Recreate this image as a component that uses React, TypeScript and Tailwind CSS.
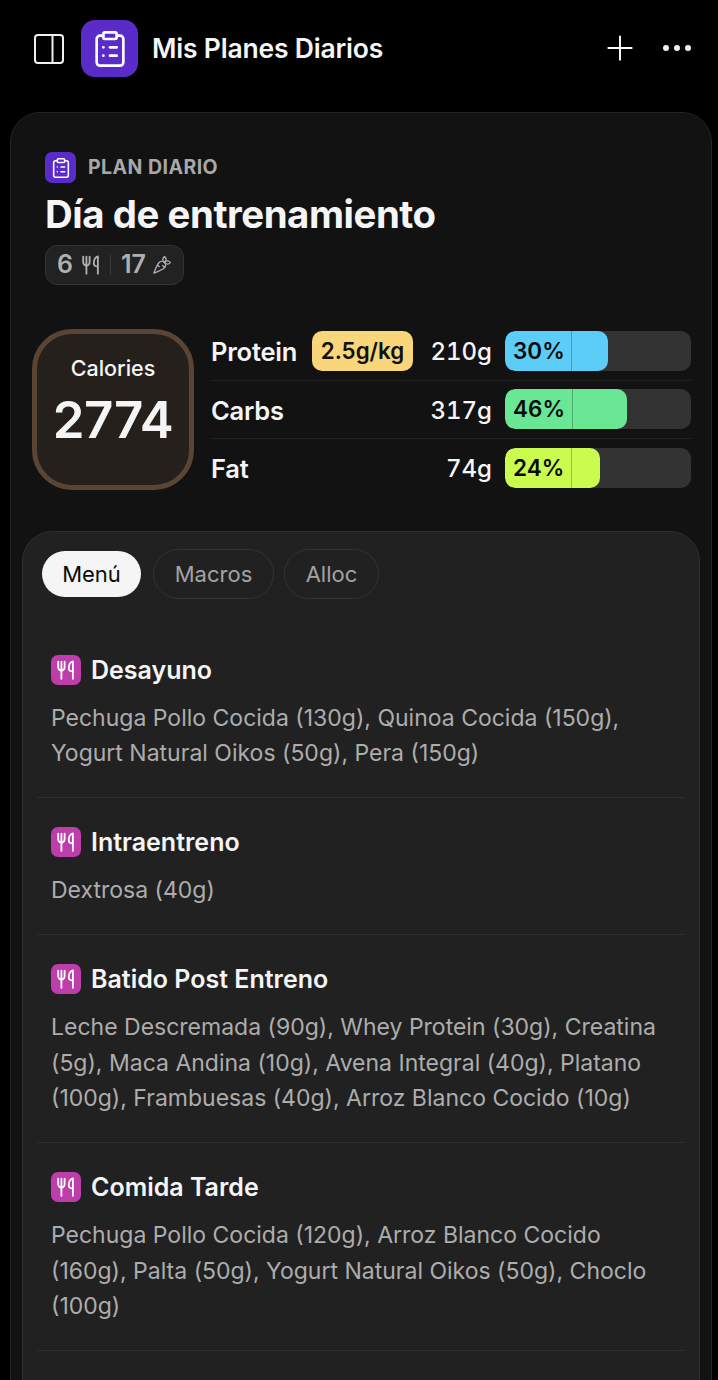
import { ClipboardList, Carrot, Plus } from "lucide-react";

function Utensil({ className }: { className?: string }) {
  return (
    <svg viewBox="0 0 24 24" fill="none" stroke="currentColor" strokeWidth="2" strokeLinecap="round" strokeLinejoin="round" className={className}>
      <path d="M3.5 3v6a3.5 3.5 0 0 0 7 0V3" />
      <path d="M7 3v18.5" />
      <path d="M19.5 21.5V2.5c-3 1-4.500 4-4.500 7.500 0 2.500 1.500 3.500 4.500 3.500" />
    </svg>
  );
}

function Meal({ title, text, divider = true }: { title?: string; text?: string; divider?: boolean }) {
  return (
    <div className={divider ? "border-b border-[#2e2e2e] px-[14px] pt-[29px] pb-[25.5px]" : "px-[14px] pt-[29px] pb-[25.5px]"}>
      <div className="flex h-[30px] items-center gap-[10px]">
        <div className="flex h-[30px] w-[30px] items-center justify-center rounded-[7px] bg-[#bd3dab]">
          <Utensil className="h-[22px] w-[22px] text-white" />
        </div>
        {title ? <div className="text-[25px] font-semibold leading-[30px] text-[#f5f5f5]">{title}</div> : null}
      </div>
      {text ? <p className="mt-[16px] text-[23px] leading-[35.5px] text-[#adadad]">{text}</p> : null}
    </div>
  );
}

function Macro({ name, grams, pct, fill, tick, color, badge, rowClass, textClass }: { name: string; grams: string; pct: string; fill: number; tick: number; color: string; badge?: string; rowClass: string; textClass: string }) {
  return (
    <div className={rowClass}>
      <div className="flex h-[40px] w-[281px] shrink-0 items-center">
        <span className={`w-[101px] shrink-0 text-[25.5px] font-semibold tracking-[-0.2px] text-[#f5f5f5] ${textClass}`}>{name}</span>
        {badge ? (
          <span className="flex h-[40px] w-[101px] items-center justify-center rounded-[10px] bg-[#f9d67a] text-[22.3px] font-semibold text-[#111]">{badge}</span>
        ) : null}
        <span className={`ml-auto text-[24px] font-medium tabular-nums text-[#f5f5f5] ${textClass}`}>{grams}</span>
      </div>
      <div className="relative ml-[13px] h-[40px] flex-1 overflow-hidden rounded-[10px] bg-[#333333]">
        <div className="h-full rounded-[10px]" style={{ width: fill, backgroundColor: color }} />
        <div className="absolute top-0 h-full w-[1px] bg-black/25" style={{ left: tick }} />
        <span className="absolute left-[8px] top-0 text-[22.5px] font-semibold leading-[40px] text-[#0a0a0a]">{pct}</span>
      </div>
    </div>
  );
}

export default function App() {
  return (
    <div className="h-[1380px] overflow-hidden bg-black font-['Inter',sans-serif]">
      <header className="flex h-[112px] items-start pl-[34px] pr-[27px] pt-[20px]">
        <svg viewBox="0 0 30 30" fill="none" stroke="#f0f0f0" strokeWidth="2" className="mt-[14px] h-[30px] w-[30px] shrink-0">
          <rect x="1" y="1" width="28" height="28" rx="3" />
          <path d="M18.500 1v28" />
        </svg>
        <div className="ml-[17px] flex h-[57px] w-[57px] shrink-0 items-center justify-center rounded-[14px] bg-[#5b2bc9]">
          <ClipboardList className="h-[40px] w-[40px] text-white" strokeWidth={1.6} />
        </div>
        <div className="ml-[14px] mt-[12px] text-[26.5px] font-semibold leading-[33px] tracking-[-0.2px] text-[#f5f5f5]">Mis Planes Diarios</div>
        <Plus className="ml-auto mt-[8px] h-[40px] w-[40px] text-white" strokeWidth={1.15} />
        <div className="ml-[23px] mt-[25px] flex gap-[5px]">
          <span className="h-[6px] w-[6px] rounded-full bg-[#eee]" />
          <span className="h-[6px] w-[6px] rounded-full bg-[#eee]" />
          <span className="h-[6px] w-[6px] rounded-full bg-[#eee]" />
        </div>
      </header>

      <main className="ml-[10px] w-[702px] rounded-t-[30px] border border-[#242424] bg-[#121212] pl-[11px] pr-[11px] pt-[39px]">
        <div className="pl-[23px]">
          <div className="flex h-[31px] items-center gap-[12px]">
            <div className="flex h-[31px] w-[31px] items-center justify-center rounded-[7px] bg-[#5b2bc9]">
              <ClipboardList className="h-[22px] w-[22px] text-white" strokeWidth={1.7} />
            </div>
            <span className="text-[19.5px] font-bold tracking-[0.45px] text-[#a8a8a8]">PLAN DIARIO</span>
          </div>
          <h1 className="mt-[7px] text-[38.4px] font-bold leading-[48px] tracking-[-0.45px] text-[#f5f5f5]">Día de entrenamiento</h1>
          <div className="mt-[7px] flex h-[40px] w-[139px] items-center rounded-[12px] border border-[#333] bg-[#222222] pl-[11px] text-[#b0b0b0]">
            <span className="text-[25px] font-semibold">6</span>
            <Utensil className="ml-[7px] h-[22px] w-[22px]" />
            <span className="ml-[8px] h-[20px] w-[1px] bg-[#3a3a3a]" />
            <span className="ml-[10px] text-[25px] font-semibold">17</span>
            <Carrot className="ml-[6px] h-[20px] w-[20px]" strokeWidth={1.6} />
          </div>
        </div>

        <section className="mt-[44px] flex items-start pl-[10px] pr-[9px]">
          <div className="flex h-[161px] w-[162px] shrink-0 flex-col items-center rounded-[40px] border-[5px] border-[#5a4535] bg-[#25201c] pt-[20px]">
            <div className="text-[21.5px] font-medium leading-[28px] text-[#f5f5f5]">Calories</div>
            <div className="mt-[8px] text-[51px] font-semibold leading-[60px] tracking-[-0.5px] text-[#f5f5f5]">2774</div>
          </div>
          <div className="ml-[17px] flex-1">
            <Macro rowClass="flex h-[52px] items-start border-b border-[#222] pt-[2px]" textClass="mt-[2px]" name="Protein" badge="2.5g/kg" grams="210g" pct="30%" fill={103} tick={66} color="#5bcdf7" />
            <Macro rowClass="flex h-[58px] items-start border-b border-[#222] pt-[8px]" textClass="mt-[4px]" name="Carbs" grams="317g" pct="46%" fill={122} tick={67} color="#69e795" />
            <Macro rowClass="flex h-[50px] items-start pt-[9px]" textClass="mt-[2px]" name="Fat" grams="74g" pct="24%" fill={95} tick={66} color="#c9fc4f" />
          </div>
        </section>

        <section className="mt-[41px] rounded-t-[30px] border border-[#2e2e2e] bg-[#212121] px-[14px] pt-[17px]">
          <div className="flex items-center pl-[5px]">
            <button className="flex h-[46px] w-[99px] items-center justify-center rounded-full bg-[#f5f5f5] text-[22px] text-[#0a0a0a]">Menú</button>
            <button className="ml-[12px] flex h-[50px] w-[121px] items-center justify-center rounded-full border border-[#333] text-[22px] text-[#a3a3a3]">Macros</button>
            <button className="ml-[10px] flex h-[50px] w-[95px] items-center justify-center rounded-full border border-[#333] text-[22px] text-[#a3a3a3]">Alloc</button>
          </div>
          <div className="mt-[26.5px]">
            <Meal title="Desayuno" text="Pechuga Pollo Cocida (130g), Quinoa Cocida (150g), Yogurt Natural Oikos (50g), Pera (150g)" />
            <Meal title="Intraentreno" text="Dextrosa (40g)" />
            <Meal title="Batido Post Entreno" text="Leche Descremada (90g), Whey Protein (30g), Creatina (5g), Maca Andina (10g), Avena Integral (40g), Platano (100g), Frambuesas (40g), Arroz Blanco Cocido (10g)" />
            <Meal title="Comida Tarde" text="Pechuga Pollo Cocida (120g), Arroz Blanco Cocido (160g), Palta (50g), Yogurt Natural Oikos (50g), Choclo (100g)" />
            <Meal divider={false} />
          </div>
        </section>
      </main>
    </div>
  );
}
